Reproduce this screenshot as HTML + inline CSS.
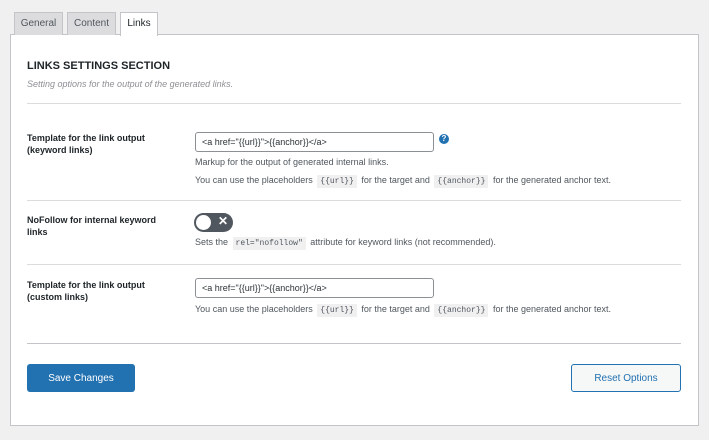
<!DOCTYPE html>
<html><head><style>
body{margin:0;background:#f0f0f1;font-family:"Liberation Sans",sans-serif;width:709px;height:440px;position:relative;overflow:hidden;color:#3c434a}
.a{position:absolute;white-space:nowrap}
.tab{position:absolute;top:12px;height:22px;border:1px solid #c3c4c7;border-bottom:none;background:#dcdcde;font-size:10px;line-height:22px;text-align:center;color:#50575e}
.panel{position:absolute;left:10px;top:34px;width:687px;height:390px;background:#fff;border:1px solid #c3c4c7}
.hr{position:absolute;left:27px;width:654px;height:1px;background:#dcdcde}
.lbl{font-size:9px;font-weight:bold;color:#1d2327;line-height:12px}
.inp{position:absolute;left:195px;height:20px;border:1px solid #8c8f94;border-radius:3px;font-size:9px;line-height:18px;padding-left:6px;box-sizing:border-box;width:239px;color:#2c3338}
.d{font-size:9px;color:#50575e}
code{background:#f0f0f1;font-family:"Liberation Mono",monospace;font-size:8px;padding:2px 3px;margin:0 2px}
</style></head><body>
<div class="panel"></div>
<div class="tab" style="left:14px;width:47px">General</div>
<div class="tab" style="left:67px;width:47px">Content</div>
<div class="tab" style="left:120px;width:36px;background:#fff;height:23px;color:#1d2327">Links</div>
<div class="a" style="left:27px;top:60px;font-size:11px;font-weight:bold;color:#1d2327">LINKS SETTINGS SECTION</div>
<div class="a" style="left:27px;top:79px;font-size:9px;font-style:italic;color:#8c8f94">Setting options for the output of the generated links.</div>
<div class="hr" style="top:103px"></div>
<div class="a lbl" style="left:27px;top:132px">Template for the link output<br>(keyword links)</div>
<div class="inp" style="top:132px">&lt;a href="{{url}}"&gt;{{anchor}}&lt;/a&gt;</div>
<div class="a" style="left:439px;top:134px;width:10px;height:10px;border-radius:50%;background:#2271b1;color:#fff;font-size:8px;font-weight:bold;text-align:center;line-height:10px">?</div>
<div class="a d" style="left:195px;top:157px">Markup for the output of generated internal links.</div>
<div class="a d" style="left:195px;top:175px">You can use the placeholders <code>{{url}}</code> for the target and <code>{{anchor}}</code> for the generated anchor text.</div>
<div class="hr" style="top:200px"></div>
<div class="a lbl" style="left:27px;top:214px">NoFollow for internal keyword<br>links</div>
<div class="a" style="left:194px;top:213px;width:39px;height:19px;border-radius:10px;background:#50575e"></div>
<div class="a" style="left:196px;top:215px;width:15px;height:15px;border-radius:50%;background:#fff"></div>
<div class="a" style="left:218px;top:214px;color:#fff;font-size:12px;font-weight:bold">✕</div>
<div class="a d" style="left:195px;top:237px">Sets the <code>rel="nofollow"</code> attribute for keyword links (not recommended).</div>
<div class="hr" style="top:264px"></div>
<div class="a lbl" style="left:27px;top:279px">Template for the link output<br>(custom links)</div>
<div class="inp" style="top:278px">&lt;a href="{{url}}"&gt;{{anchor}}&lt;/a&gt;</div>
<div class="a d" style="left:195px;top:304px">You can use the placeholders <code>{{url}}</code> for the target and <code>{{anchor}}</code> for the generated anchor text.</div>
<div class="hr" style="top:343px;background:#c3c4c7"></div>
<div class="a" style="left:27px;top:364px;width:108px;height:28px;background:#2271b1;border-radius:3px;color:#fff;font-size:10px;text-align:center;line-height:29px">Save Changes</div>
<div class="a" style="left:571px;top:364px;width:108px;height:26px;background:#f6f7f7;border:1px solid #2271b1;border-radius:3px;color:#2271b1;font-size:10px;text-align:center;line-height:28px">Reset Options</div>
</body></html>
